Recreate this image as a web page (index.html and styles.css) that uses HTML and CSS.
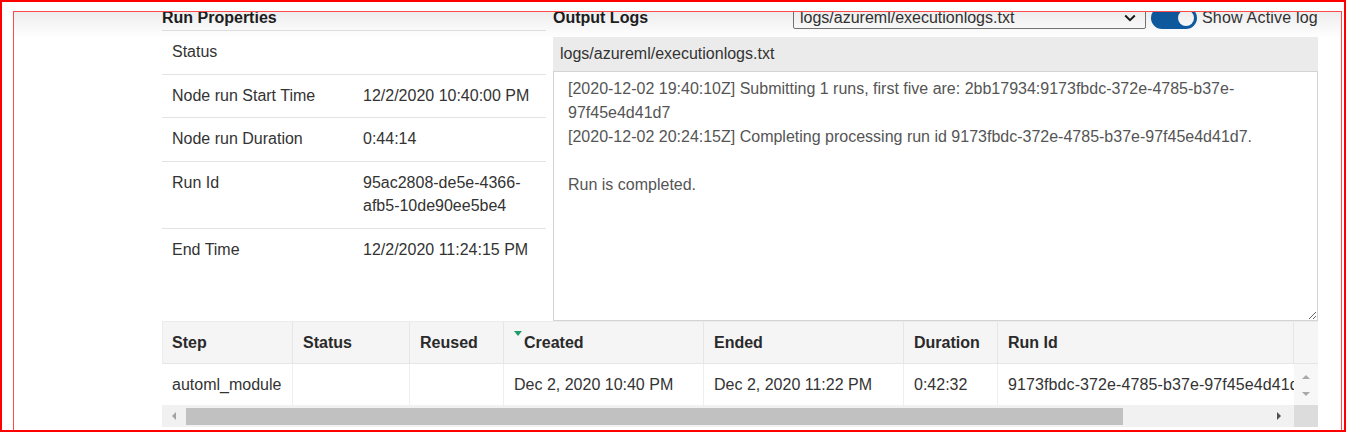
FILE: index.html
```html
<!DOCTYPE html>
<html lang="en">
<head>
<meta charset="utf-8">
<title>Run Properties</title>
<link rel="stylesheet" href="styles.css">
</head>
<body>
<div class="frame">
  <div class="viewport">
    <div class="page">
      <div class="top">
        <section class="props">
          <h2 class="title">Run Properties</h2>
          <div class="prop-table">
            <div class="prop-row"><div class="prop-label">Status</div><div class="prop-value"></div></div>
            <div class="prop-row"><div class="prop-label">Node run Start Time</div><div class="prop-value">12/2/2020 10:40:00 PM</div></div>
            <div class="prop-row"><div class="prop-label">Node run Duration</div><div class="prop-value">0:44:14</div></div>
            <div class="prop-row"><div class="prop-label">Run Id</div><div class="prop-value">95ac2808-de5e-4366-afb5-10de90ee5be4</div></div>
            <div class="prop-row"><div class="prop-label">End Time</div><div class="prop-value">12/2/2020 11:24:15 PM</div></div>
          </div>
        </section>
        <section class="logs">
          <div class="logs-head">
            <h2 class="title logs-title">Output Logs</h2>
            <div class="select">
              <span>logs/azureml/executionlogs.txt</span>
              <svg class="chev" width="12" height="8" viewBox="0 0 12 8"><path d="M1.2 1.5 L6 6.2 L10.8 1.5" fill="none" stroke="#1a1a1a" stroke-width="2"/></svg>
            </div>
            <span class="toggle"><span class="knob"></span></span>
            <span class="toggle-label">Show Active log</span>
          </div>
          <div class="log-file">logs/azureml/executionlogs.txt</div>
          <textarea class="log-text" readonly>[2020-12-02 19:40:10Z] Submitting 1 runs, first five are: 2bb17934:9173fbdc-372e-4785-b37e-97f45e4d41d7
[2020-12-02 20:24:15Z] Completing processing run id 9173fbdc-372e-4785-b37e-97f45e4d41d7.

Run is completed.</textarea>
        </section>
      </div>
      <div class="grid">
        <div class="hcell">Step</div>
        <div class="hcell">Status</div>
        <div class="hcell">Reused</div>
        <div class="hcell"><span class="sort"></span><span>Created</span></div>
        <div class="hcell">Ended</div>
        <div class="hcell">Duration</div>
        <div class="hcell">Run Id</div>
        <div class="hcell hcell-blank"></div>

        <div class="dcell">automl_module</div>
        <div class="dcell"></div>
        <div class="dcell"></div>
        <div class="dcell">Dec 2, 2020 10:40 PM</div>
        <div class="dcell">Dec 2, 2020 11:22 PM</div>
        <div class="dcell">0:42:32</div>
        <div class="dcell dcell-last">9173fbdc-372e-4785-b37e-97f45e4d41d7</div>
        <div class="vscroll"><span class="arrow-up"></span><span class="arrow-down"></span></div>

        <div class="hscroll">
          <span class="hbtn"><span class="arrow-left"></span></span>
          <span class="thumb"></span>
          <span class="spacer"></span>
          <span class="hbtn hbtn-right"><span class="arrow-right"></span></span>
        </div>
        <div class="corner"></div>
      </div>
    </div>
  </div>
</div>
</body>
</html>
```
FILE: styles.css
```css
html, body {
  margin: 0;
  padding: 0;
  background: #fff;
}
body {
  font-family: "Liberation Sans", Arial, sans-serif;
  font-size: 16px;
  color: #333;
}
.frame {
  width: 1346px;
  height: 432px;
  box-sizing: border-box;
  border: 2px solid #ff0000;
  padding: 9px 2px 0 11px;
  overflow: hidden;
}
.viewport {
  position: relative;
  height: 440px;
  border: 1px solid #ff4a4a;
  border-bottom: 0;
  overflow: hidden;
  background: #fff;
}
.viewport::before {
  content: "";
  position: absolute;
  left: 0;
  right: 0;
  top: 0;
  height: 26px;
  background: linear-gradient(rgba(0, 0, 0, 0.07), rgba(0, 0, 0, 0));
  pointer-events: none;
  z-index: 2;
}
.page {
  width: 1156px;
  margin: -6px 0 0 148px;
}
.top {
  display: flex;
  gap: 7px;
}
.props {
  width: 384px;
}
.logs {
  width: 765px;
}
.title {
  margin: 0;
  font-size: 16px;
  font-weight: bold;
  line-height: 24px;
  color: #1e1e1e;
}
.prop-row {
  display: flex;
  border-top: 1px solid #e3e3e3;
  padding: 10px 0;
  line-height: 22.7px;
}
.prop-label {
  width: 181px;
  padding-left: 10px;
}
.prop-value {
  flex: 1;
  padding: 0 10px;
}
.logs-head {
  display: flex;
  align-items: center;
  height: 24px;
}
.logs-title {
  width: 240px;
  flex: none;
}
.select {
  width: 353px;
  height: 22px;
  box-sizing: border-box;
  border: 1px solid #767676;
  border-radius: 2px;
  display: flex;
  align-items: center;
  justify-content: space-between;
  padding: 0 9px 0 6px;
  line-height: 20px;
  background: #fff;
  flex: none;
}
.chev {
  display: block;
}
.toggle {
  margin-left: 5px;
  width: 46px;
  height: 22px;
  border-radius: 11px;
  background: #0f5ca3;
  display: flex;
  align-items: center;
  justify-content: flex-end;
  padding-right: 3px;
  box-sizing: border-box;
  flex: none;
}
.knob {
  width: 16px;
  height: 16px;
  border-radius: 50%;
  background: #fff;
}
.toggle-label {
  margin-left: 5px;
  white-space: nowrap;
  letter-spacing: 0.2px;
}
.log-file {
  margin-top: 7px;
  height: 34px;
  line-height: 34px;
  background: #ebebeb;
  padding-left: 7px;
  color: #333;
}
.log-text {
  display: block;
  box-sizing: border-box;
  width: 765px;
  height: 250px;
  margin: 0;
  border: 1px solid #d4d4d4;
  border-radius: 0;
  padding: 5px 13px 5px 14px;
  font-family: "Liberation Sans", Arial, sans-serif;
  font-size: 16px;
  line-height: 24px;
  color: #555;
  background: #fff;
  resize: both;
  outline: none;
}
.grid {
  display: grid;
  grid-template-columns: 131px 117px 94px 200px 200px 94px 296px 24px;
}
.hcell {
  height: 43px;
  box-sizing: border-box;
  background: #f5f5f5;
  border-top: 1px solid #ececec;
  border-bottom: 1px solid #e6e6e6;
  border-right: 1px solid #e6e6e6;
  font-weight: bold;
  color: #2a2a2a;
  padding-left: 10px;
  display: flex;
  align-items: center;
  white-space: nowrap;
}
.hcell:first-child {
  border-left: 1px solid #ececec;
  padding-left: 9px;
}
.hcell-blank {
  border-right: 0;
  padding: 0;
}
.sort {
  align-self: flex-start;
  margin-top: 9px;
  margin-right: 2px;
  width: 0;
  height: 0;
  border-left: 4.5px solid transparent;
  border-right: 4.5px solid transparent;
  border-top: 5px solid #1f9c6d;
}
.dcell {
  height: 41px;
  box-sizing: border-box;
  border-right: 1px solid #eeeeee;
  padding-left: 10px;
  display: flex;
  align-items: center;
  white-space: nowrap;
  overflow: hidden;
  color: #333;
}
.dcell:first-of-type {
  border-left: 1px solid #ececec;
  padding-left: 9px;
}
.dcell-last {
  border-right: 0;
  letter-spacing: 0.1px;
}
.vscroll {
  height: 41px;
  box-sizing: border-box;
  background: #f7f7f7;
  display: flex;
  flex-direction: column;
  align-items: center;
  justify-content: space-between;
  padding: 11px 0 9px;
}
.arrow-up {
  width: 0;
  height: 0;
  border-left: 4px solid transparent;
  border-right: 4px solid transparent;
  border-bottom: 4px solid #a8a8a8;
}
.arrow-down {
  width: 0;
  height: 0;
  border-left: 4px solid transparent;
  border-right: 4px solid transparent;
  border-top: 4px solid #a8a8a8;
}
.hscroll {
  grid-column: 1 / 8;
  height: 22px;
  background: #f1f1f1;
  display: flex;
  align-items: center;
}
.hbtn {
  width: 24px;
  height: 22px;
  display: flex;
  align-items: center;
  justify-content: center;
  flex: none;
}
.hbtn-right {
  width: 30px;
}
.arrow-left {
  width: 0;
  height: 0;
  border-top: 4px solid transparent;
  border-bottom: 4px solid transparent;
  border-right: 4px solid #a3a3a3;
}
.arrow-right {
  width: 0;
  height: 0;
  border-top: 4px solid transparent;
  border-bottom: 4px solid transparent;
  border-left: 4px solid #505050;
}
.thumb {
  width: 937px;
  height: 17px;
  background: #c1c1c1;
  flex: none;
}
.spacer {
  flex: 1;
}
.corner {
  height: 22px;
  background: #dcdcdc;
}
```
